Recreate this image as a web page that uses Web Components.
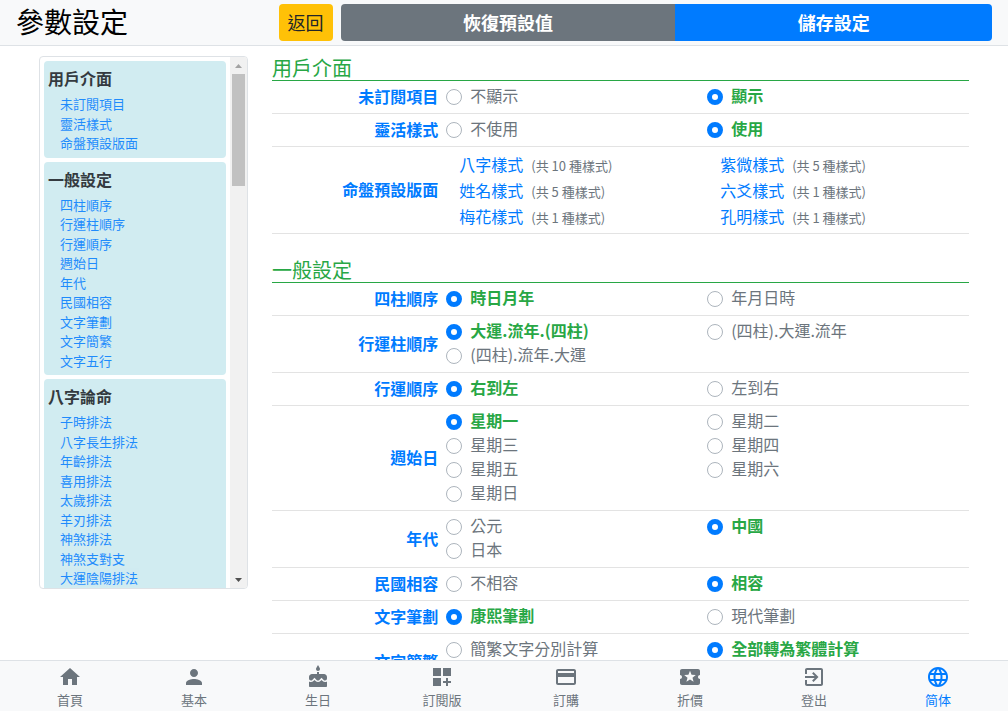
<!DOCTYPE html>
<html lang="zh-Hant">
<head>
<meta charset="utf-8">
<meta name="viewport" content="width=device-width, initial-scale=1">
<title>參數設定</title>
<style>
  body { margin: 0; font: 16px/24px "Noto Sans CJK TC", "Noto Sans", sans-serif; color: #212529; background: #fff; }
</style>
</head>
<body>
<settings-page>
  <page-header slot="header" heading="參數設定"></page-header>

  <side-nav slot="side">
    <nav-group heading="用戶介面" items="未訂閱項目|靈活樣式|命盤預設版面"></nav-group>
    <nav-group heading="一般設定" items="四柱順序|行運柱順序|行運順序|週始日|年代|民國相容|文字筆劃|文字簡繁|文字五行"></nav-group>
    <nav-group heading="八字論命" items="子時排法|八字長生排法|年齡排法|喜用排法|太歲排法|羊刃排法|神煞排法|神煞支對支|大運陰陽排法"></nav-group>
  </side-nav>

  <setting-section heading="用戶介面">
    <setting-row label="未訂閱項目" options="不顯示|*顯示"></setting-row>
    <setting-row label="靈活樣式" options="不使用|*使用"></setting-row>
    <setting-row label="命盤預設版面">
      <style-link count="10">八字樣式</style-link>
      <style-link count="5">紫微樣式</style-link>
      <style-link count="5">姓名樣式</style-link>
      <style-link count="1">六爻樣式</style-link>
      <style-link count="1">梅花樣式</style-link>
      <style-link count="1">孔明樣式</style-link>
    </setting-row>
  </setting-section>

  <setting-section heading="一般設定">
    <setting-row label="四柱順序" options="*時日月年|年月日時"></setting-row>
    <setting-row label="行運柱順序" options="*大運.流年.(四柱)|(四柱).大運.流年|(四柱).流年.大運"></setting-row>
    <setting-row label="行運順序" options="*右到左|左到右"></setting-row>
    <setting-row label="週始日" options="*星期一|星期二|星期三|星期四|星期五|星期六|星期日"></setting-row>
    <setting-row label="年代" options="公元|*中國|日本"></setting-row>
    <setting-row label="民國相容" options="不相容|*相容"></setting-row>
    <setting-row label="文字筆劃" options="*康熙筆劃|現代筆劃"></setting-row>
    <setting-row label="文字簡繁" options="簡繁文字分別計算|*全部轉為繁體計算|全部轉為簡體計算"></setting-row>
  </setting-section>

  <tab-bar slot="tabs">
    <tab-item icon="home">首頁</tab-item>
    <tab-item icon="person">基本</tab-item>
    <tab-item icon="cake">生日</tab-item>
    <tab-item icon="widgets">訂閱版</tab-item>
    <tab-item icon="card">訂購</tab-item>
    <tab-item icon="ticket">折價</tab-item>
    <tab-item icon="exit">登出</tab-item>
    <tab-item icon="globe" active lang="zh-Hans">简体</tab-item>
  </tab-bar>
</settings-page>

<script>
  const ICONS = {
    home: "M10 20v-6h4v6h5v-8h3L12 3 2 12h3v8z",
    person: "M12 12c2.21 0 4-1.79 4-4s-1.79-4-4-4-4 1.79-4 4 1.79 4 4 4zm0 2c-2.67 0-8 1.34-8 4v2h16v-2c0-2.66-5.33-4-8-4z",
    cake: "M12 6c1.11 0 2-.9 2-2 0-.38-.1-.73-.29-1.03L12 0l-1.71 2.97c-.19.3-.29.65-.29 1.03 0 1.1.9 2 2 2zm4.6 9.99l-1.07-1.07-1.08 1.07c-1.3 1.3-3.58 1.31-4.89 0l-1.07-1.07-1.09 1.07C6.75 16.64 5.88 17 4.96 17c-.73 0-1.4-.23-1.96-.61V21c0 .55.45 1 1 1h16c.55 0 1-.45 1-1v-4.61c-.56.38-1.23.61-1.96.61-.92 0-1.79-.36-2.44-1.01zM18 9h-5V7h-2v2H6c-1.66 0-3 1.34-3 3v1.54c0 1.08.88 1.96 1.96 1.96.52 0 1.02-.2 1.38-.57l2.14-2.13 2.13 2.13c.74.74 2.03.74 2.77 0l2.14-2.13 2.13 2.13c.37.37.86.57 1.38.57 1.08 0 1.96-.88 1.96-1.96V12C21 10.34 19.66 9 18 9z",
    widgets: "M3 3h8v8H3zM13 3h8v8h-8zM3 13h8v8H3zM18 13h-2v3h-3v2h3v3h2v-3h3v-2h-3z",
    card: "M20 4H4c-1.11 0-1.99.89-1.99 2L2 18c0 1.11.89 2 2 2h16c1.11 0 2-.89 2-2V6c0-1.11-.89-2-2-2zm0 14H4v-6h16v6zm0-10H4V6h16v2z",
    ticket: "M20 12c0-1.1.9-2 2-2V6c0-1.1-.9-2-2-2H4c-1.1 0-1.99.9-1.99 2v4c1.1 0 1.99.9 1.99 2s-.89 2-2 2v4c0 1.1.9 2 2 2h16c1.1 0 2-.9 2-2v-4c-1.1 0-2-.9-2-2zm-4.42 4.8L12 14.5l-3.58 2.3 1.08-4.12-3.29-2.69 4.24-.25L12 5.8l1.54 3.95 4.24.25-3.29 2.69 1.09 4.11z",
    exit: "M10.09 15.59L11.5 17l5-5-5-5-1.41 1.41L12.67 11H3v2h9.67l-2.58 2.59zM19 3H5c-1.11 0-2 .9-2 2v4h2V5h14v14H5v-4H3v4c0 1.1.89 2 2 2h14c1.1 0 2-.9 2-2V5c0-1.1-.9-2-2-2z",
    globe: "M11.99 2C6.47 2 2 6.48 2 12s4.47 10 9.99 10C17.52 22 22 17.52 22 12S17.52 2 11.99 2zm6.93 6h-2.95c-.32-1.25-.78-2.45-1.38-3.56 1.84.63 3.37 1.91 4.33 3.56zM12 4.04c.83 1.2 1.48 2.53 1.91 3.96h-3.82c.43-1.43 1.08-2.76 1.91-3.96zM4.26 14C4.1 13.36 4 12.69 4 12s.1-1.36.26-2h3.38c-.08.66-.14 1.32-.14 2 0 .68.06 1.34.14 2H4.26zm.82 2h2.95c.32 1.25.78 2.45 1.38 3.56-1.84-.63-3.37-1.9-4.33-3.56zm2.95-8H5.08c.96-1.66 2.49-2.93 4.33-3.56C8.81 5.55 8.35 6.75 8.03 8zM12 19.96c-.83-1.2-1.48-2.53-1.91-3.96h3.82c-.43 1.43-1.08 2.76-1.91 3.96zM14.34 14H9.66c-.09-.66-.16-1.32-.16-2 0-.68.07-1.35.16-2h4.68c.09.65.16 1.32.16 2 0 .68-.07 1.34-.16 2zm.25 5.56c.6-1.11 1.06-2.31 1.38-3.56h2.95c-.96 1.65-2.49 2.93-4.33 3.56zM16.36 14c.08-.66.14-1.32.14-2 0-.68-.06-1.34-.14-2h3.38c.16.64.26 1.31.26 2s-.1 1.36-.26 2h-3.38z"
  };

  class BaseElement extends HTMLElement {
    connectedCallback() {
      if (this.shadowRoot) return;
      this.attachShadow({ mode: "open" }).innerHTML = this.render();
      this.ready();
    }
    ready() {}
    attr(name) { return this.getAttribute(name) || ""; }
    list(name) { return this.attr(name).split("|").filter(Boolean); }
  }

  customElements.define("settings-page", class extends BaseElement {
    render() {
      return `<style>
        :host { display: flex; flex-direction: column; height: 100vh; }
        main { flex: 1; min-height: 0; overflow-y: auto; scrollbar-width: none; }
        .columns { display: grid; grid-template-columns: 3fr 10fr; gap: 24px; align-items: start;
                   max-width: 930px; margin: 0 auto; padding: 10px 24px; }
        .content { display: flex; flex-direction: column; gap: 24px; }
      </style>
      <slot name="header"></slot>
      <main><div class="columns"><slot name="side"></slot><div class="content"><slot></slot></div></div></main>
      <slot name="tabs"></slot>`;
    }
  });

  customElements.define("page-header", class extends BaseElement {
    render() {
      return `<style>
        :host { display: block; background: #f8f9fa; border-bottom: 1px solid #dee2e6; }
        header { display: flex; padding: 4px 16px; }
        h1 { margin: 0; width: calc(27% - 1px); font-size: 28px; line-height: 34px; font-weight: 400; color: #000; }
        button { border: 0; margin: 0; font: inherit; font-size: 18px; line-height: 27px; padding: 5px 9px; border-radius: 4px; }
        .back { background: #ffc107; color: #212529; margin-right: 8px; }
        .group { flex: 1; display: flex; }
        .group button { flex: 1 1 auto; color: #fff; font-weight: 700; }
        .reset { background: #6c757d; border-radius: 4px 0 0 4px; }
        .save { background: #007bff; border-radius: 0 4px 4px 0; }
      </style>
      <header>
        <h1>${this.attr("heading")}</h1>
        <button class="back" type="button">返回</button>
        <div class="group">
          <button class="reset" type="button">恢復預設值</button>
          <button class="save" type="button">儲存設定</button>
        </div>
      </header>`;
    }
  });

  customElements.define("side-nav", class extends BaseElement {
    render() {
      return `<style>
        :host { display: flex; height: 75vh; box-sizing: border-box; border: 1px solid #dee2e6; border-radius: 4px; overflow: hidden; }
        nav { flex: 1; display: flex; flex-direction: column; gap: 4px; padding: 4px; overflow-y: auto; scrollbar-width: none; }
        .bar { width: 17px; display: flex; flex-direction: column; background: #f1f1f1; }
        .bar button { border: 0; padding: 0; height: 17px; background: none; display: grid; place-items: center; }
        .track { flex: 1; padding: 0 2px; }
        .thumb { height: 112px; background: #c1c1c1; }
        svg { display: block; }
      </style>
      <nav><slot></slot></nav>
      <div class="bar">
        <button type="button" aria-label="向上捲動"><svg width="7" height="4"><path d="M0 4L3.500 0 7 4z" fill="#a3a3a3"/></svg></button>
        <div class="track"><div class="thumb"></div></div>
        <button type="button" aria-label="向下捲動"><svg width="7" height="4"><path d="M0 0L3.500 4 7 0z" fill="#505050"/></svg></button>
      </div>`;
    }
    ready() {
      const nav = this.shadowRoot.querySelector("nav");
      const [up, down] = this.shadowRoot.querySelectorAll("button");
      up.onclick = () => nav.scrollBy(0, -40);
      down.onclick = () => nav.scrollBy(0, 40);
    }
  });

  customElements.define("nav-group", class extends BaseElement {
    render() {
      return `<style>
        :host { display: block; flex: none; background: #d1ecf1; border-radius: 4px; padding: 5px 4px; }
        h2 { margin: 0 0 4px; font-size: 16px; line-height: 24px; font-weight: 700; color: #343a40; }
        ul { list-style: none; margin: 0; padding: 0 0 0 12px; font-size: 13px; line-height: 1.5; }
        a { color: #007bff; text-decoration: none; opacity: .85; }
        li { display: block; }
      </style>
      <h2>${this.attr("heading")}</h2>
      <ul>${this.list("items").map(t => `<li><a href="#${t}">${t}</a></li>`).join("")}</ul>`;
    }
  });

  customElements.define("setting-section", class extends BaseElement {
    render() {
      return `<style>
        :host { display: block; }
        h2 { margin: 0; font-size: 20px; line-height: 24px; font-weight: 400; color: #28a745; border-bottom: 1px solid #28a745; }
      </style>
      <h2>${this.attr("heading")}</h2><slot></slot>`;
    }
  });

  customElements.define("setting-row", class extends BaseElement {
    render() {
      return `<style>
        :host { display: grid; grid-template-columns: 1fr 3fr; padding: 4px 0; border-bottom: 1px solid #e3e3e3; align-items: center; }
        .label { text-align: right; padding: 0 8px 2px 0; line-height: 22px; font-weight: 700; color: #007bff; }
        .options { display: grid; grid-template-columns: 1fr 1fr; padding-right: 1px; }
        label { display: flex; gap: 8px; height: 24px; line-height: 20px; color: #6c757d; }
        input { appearance: none; box-sizing: border-box; flex: none; width: 16px; height: 16px; margin: 4px 0;
                border: 1px solid #adb5bd; border-radius: 50%; background: #fff; }
        input:checked { border: 5px solid #007bff; }
        input:checked + span { color: #28a745; font-weight: 700; }
      </style>
      <div class="label" id="label">${this.attr("label")}</div>
      <div class="options" ${this.hasAttribute("options") ? 'role="radiogroup"' : 'role="group"'} aria-labelledby="label">
        ${this.list("options").map(t => {
          const on = t.startsWith("*");
          return `<label><input type="radio" name="choice"${on ? " checked" : ""}><span>${on ? t.slice(1) : t}</span></label>`;
        }).join("")}<slot></slot>
      </div>`;
    }
  });

  customElements.define("style-link", class extends BaseElement {
    render() {
      return `<style>
        :host { display: flex; align-items: baseline; gap: 8px; height: 26px; padding-left: 13px; line-height: 26px; }
        a { color: #007bff; text-decoration: none; }
        small { font-size: 13px; color: #6c757d; }
      </style><a href="#style"><slot></slot></a><small>(共 ${this.attr("count")} 種樣式)</small>`;
    }
  });

  customElements.define("tab-bar", class extends BaseElement {
    render() {
      return `<style>
        :host { display: block; background: #f8f9fa; border-top: 1px solid #dee2e6; }
        nav { display: flex; padding: 4px 8px 0; height: 46px; }
      </style><nav><slot></slot></nav>`;
    }
  });

  customElements.define("tab-item", class extends BaseElement {
    render() {
      return `<style>
        :host { flex: 1; color: #6c757d; font-size: 13px; line-height: 20px; }
        :host([active]) { color: #007bff; }
        :host(:lang(zh-Hans)) { font-family: "Noto Sans CJK SC", "Noto Sans", sans-serif; }
        a { display: flex; flex-direction: column; align-items: center; gap: 1px; color: inherit; text-decoration: none; }
        svg { display: block; width: 24px; height: 24px; fill: currentColor; }
      </style>
      <a href="#${this.attr("icon")}"><svg viewBox="0 0 24 24" aria-hidden="true"><path d="${ICONS[this.attr("icon")]}"/></svg><span><slot></slot></span></a>`;
    }
  });
</script>
</body>
</html>
